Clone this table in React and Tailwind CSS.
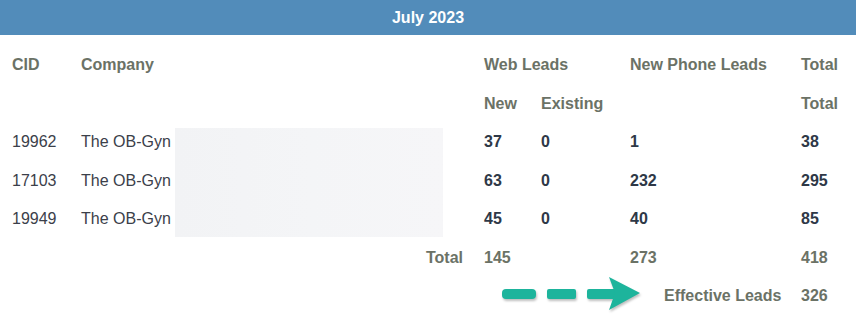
import React from "react";

const rows = [
  { cid: "19962", company: "The OB-Gyn", newWeb: 37, existing: 0, phone: 1, total: 38 },
  { cid: "17103", company: "The OB-Gyn", newWeb: 63, existing: 0, phone: 232, total: 295 },
  { cid: "19949", company: "The OB-Gyn", newWeb: 45, existing: 0, phone: 40, total: 85 },
];

function DashedArrow() {
  return (
    <svg width="142" height="36" viewBox="0 0 142 36" className="-mt-[4px] drop-shadow-[1px_2px_1px_rgba(0,0,0,0.25)]">
      <g fill="#1db49c">
        <rect x="0" y="13" width="34" height="10" rx="4" />
        <rect x="45" y="13" width="29" height="10" rx="2" />
        <rect x="85" y="13" width="30" height="10" rx="2" />
      </g>
      <path d="M107 1 L138 17 L107 34 L113 17 Z" fill="#1db49c" />
    </svg>
  );
}

export default function App() {
  const head = "text-[#6b7266] font-bold";
  const cell = "h-[38.5px] flex items-center";
  return (
    <div className="w-[856px] h-[314px] bg-white overflow-hidden font-['Liberation_Sans',Arial,sans-serif] text-[16px]">
      <div className="h-[35px] bg-[#528cba] flex items-center justify-center text-white font-bold">
        July 2023
      </div>

      <div className="relative pt-[11px] pl-[12px] grid grid-cols-[69px_403px_57px_89px_171px_1fr]">
        <div className={`${cell} ${head}`}>CID</div>
        <div className={`${cell} ${head}`}>Company</div>
        <div className={`${cell} ${head} col-span-2`}>Web Leads</div>
        <div className={`${cell} ${head}`}>New Phone Leads</div>
        <div className={`${cell} ${head}`}>Total</div>

        <div className={cell}></div>
        <div className={cell}></div>
        <div className={`${cell} ${head}`}>New</div>
        <div className={`${cell} ${head}`}>Existing</div>
        <div className={cell}></div>
        <div className={`${cell} ${head}`}>Total</div>

        {rows.map((r) => (
          <React.Fragment key={r.cid}>
            <div className={`${cell} text-[#3b404a]`}>{r.cid}</div>
            <div className={`${cell} text-[#3b404a]`}>{r.company}</div>
            <div className={`${cell} font-bold text-[#2e3847]`}>{r.newWeb}</div>
            <div className={`${cell} font-bold text-[#2e3847]`}>{r.existing}</div>
            <div className={`${cell} font-bold text-[#2e3847]`}>{r.phone}</div>
            <div className={`${cell} font-bold text-[#2e3847]`}>{r.total}</div>
          </React.Fragment>
        ))}

        <div className={`${cell} ${head} col-span-2 justify-end pr-[21px]`}>Total</div>
        <div className={`${cell} ${head} col-span-2`}>145</div>
        <div className={`${cell} ${head}`}>273</div>
        <div className={`${cell} ${head}`}>418</div>

        <div className={`${cell} col-span-2`}></div>
        <div className={`${cell} col-span-3 pl-[18px] gap-[20px]`}>
          <DashedArrow />
          <span className={head}>Effective Leads</span>
        </div>
        <div className={`${cell} ${head}`}>326</div>

        {/* redaction block over company names */}
        <div className="absolute left-[175px] top-[93px] w-[268px] h-[109px] bg-gradient-to-r from-[#f2f3f5] via-[#f4f5f7] to-[#f6f6f8]" />
      </div>
    </div>
  );
}
